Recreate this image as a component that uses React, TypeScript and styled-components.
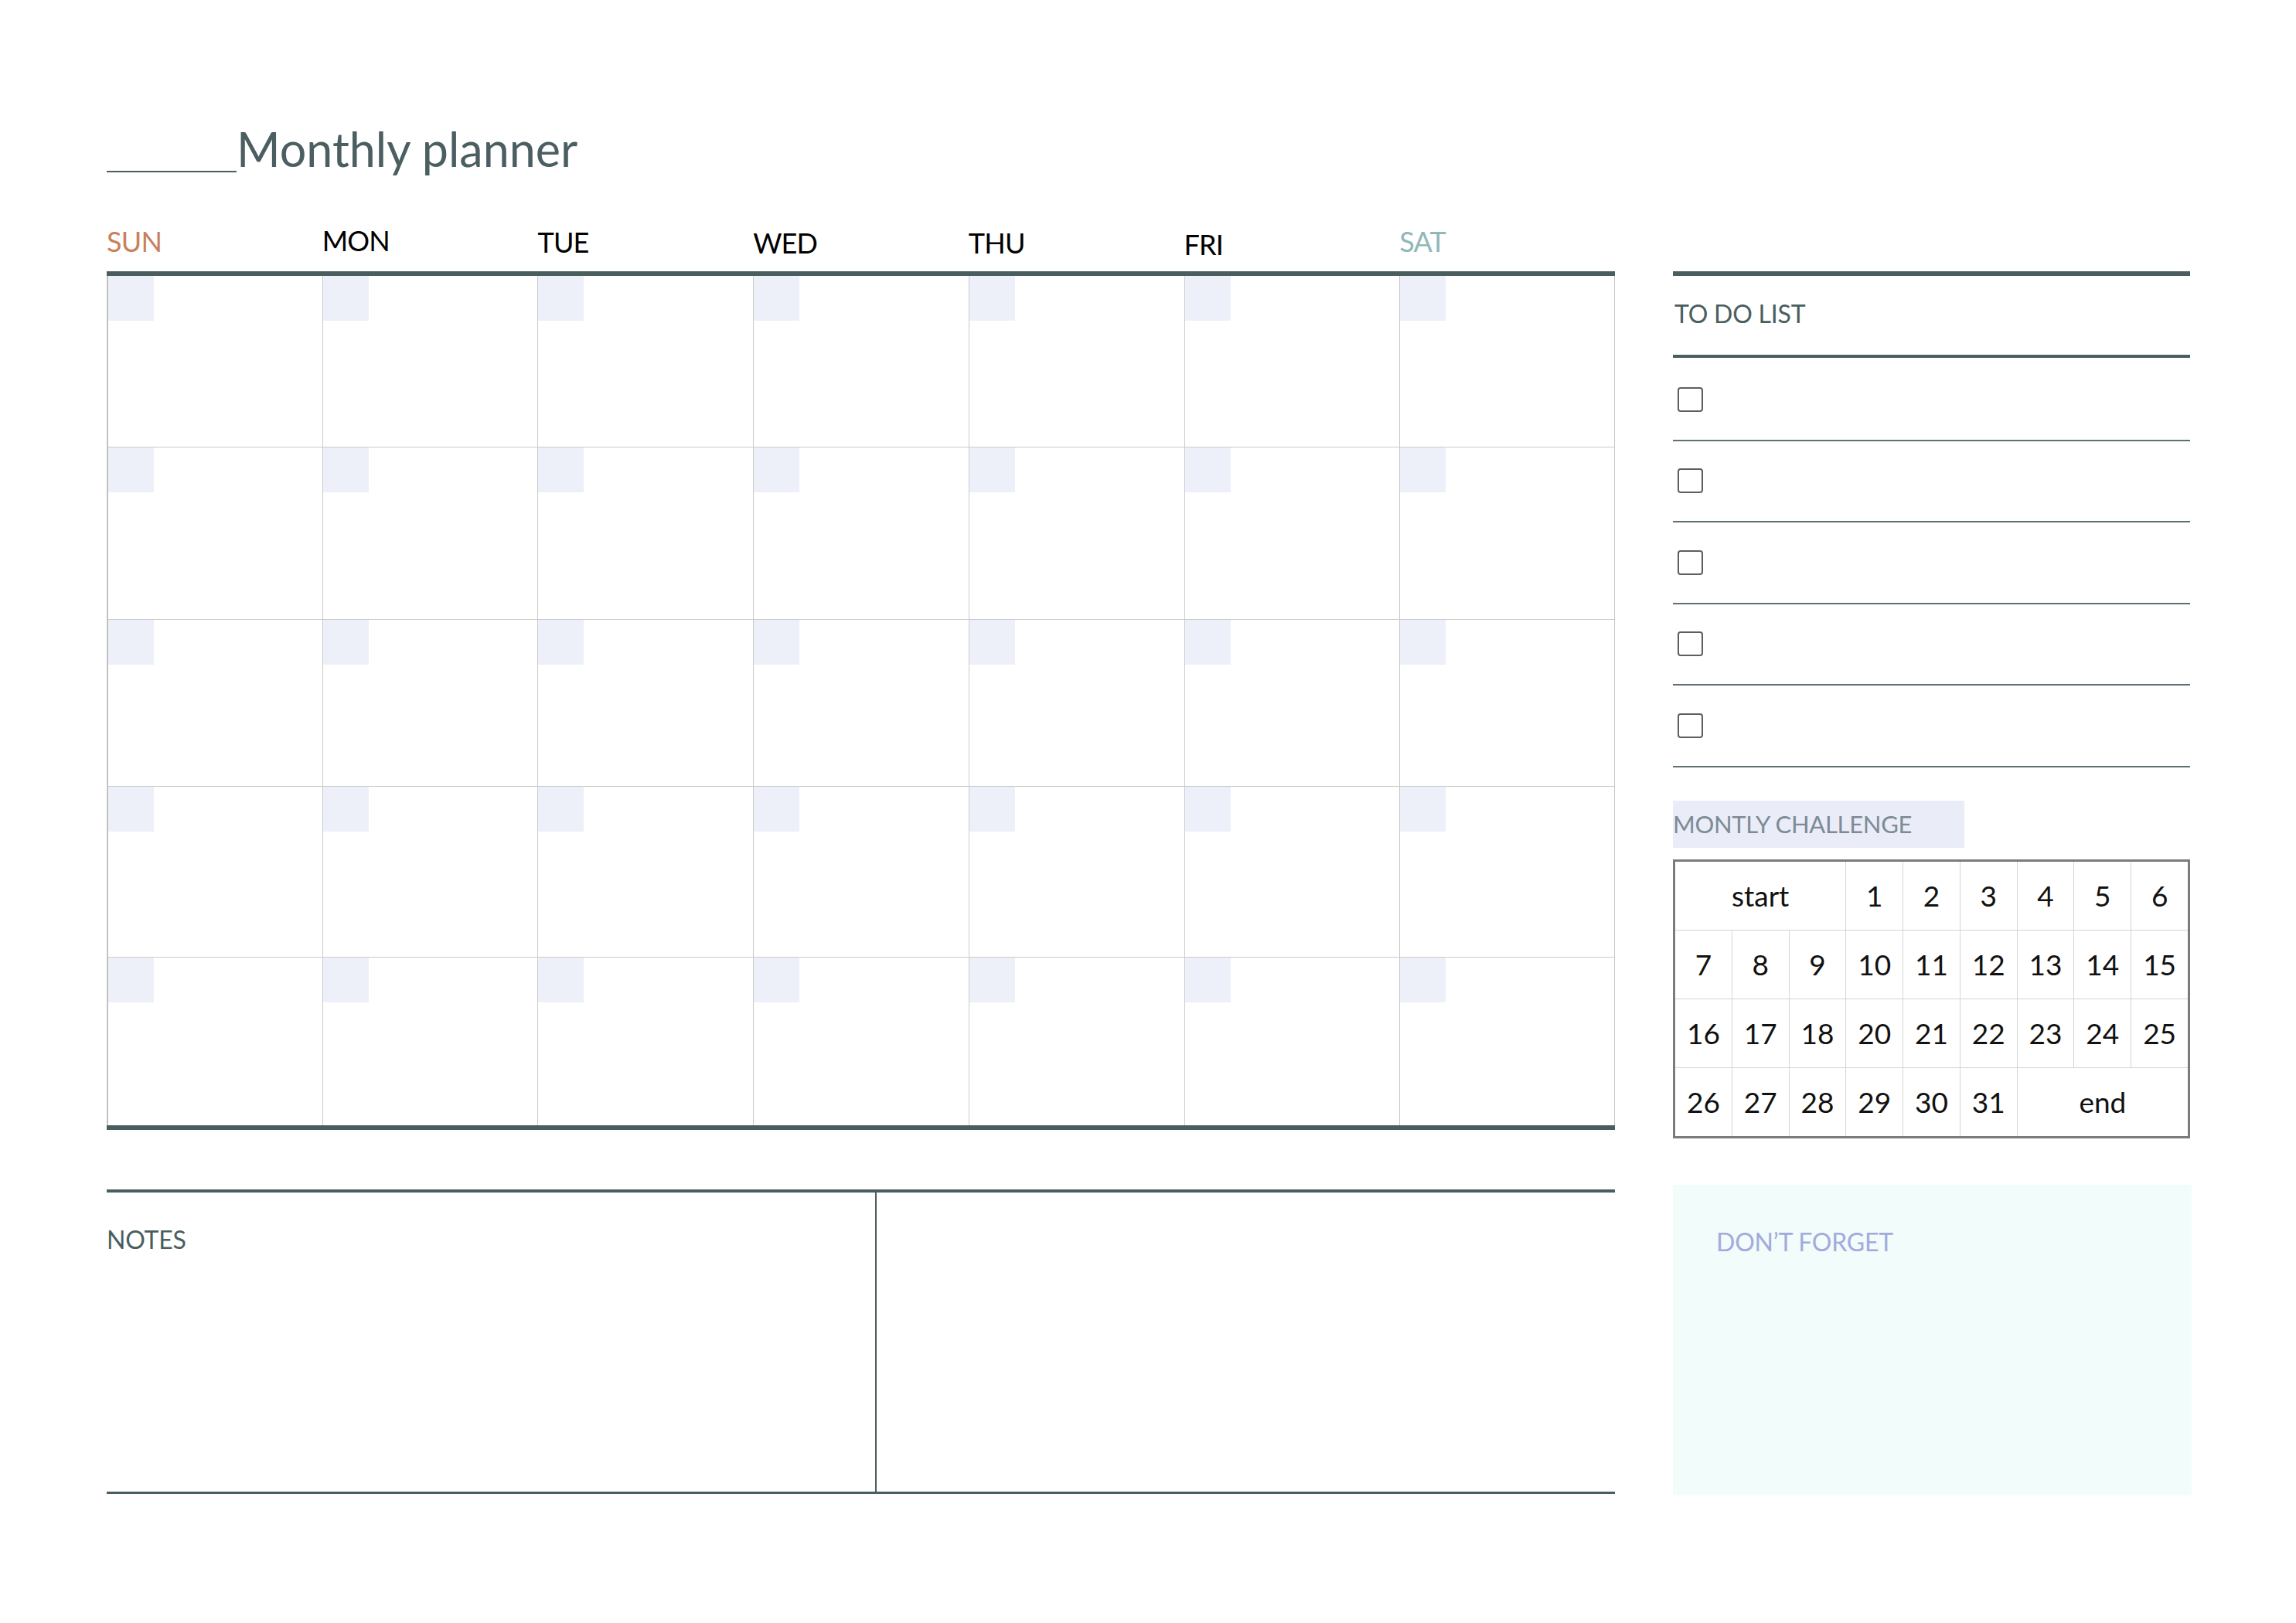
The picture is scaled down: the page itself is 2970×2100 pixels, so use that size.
import React from "react";
import styled, { createGlobalStyle } from "styled-components";

const GlobalStyle = createGlobalStyle`
  html, body {
    margin: 0;
    padding: 0;
    background: #ffffff;
  }
  body {
    font-family: Lato, "Open Sans", "Noto Sans", sans-serif;
  }
  * { box-sizing: border-box; }
`;

const SLATE = "#4a5d5f";
const GRID = "#cbcbcb";

const Page = styled.div`
  width: 2970px;
  min-height: 2100px;
  padding: 162px 0 0 138px;
  background: #fff;
`;

const TitleRow = styled.div`
  display: flex;
  align-items: flex-end;
  height: 61px;
`;

const TitleBlank = styled.span`
  display: block;
  width: 168px;
  height: 2px;
  background: ${SLATE};
`;

const Title = styled.h1`
  margin: 0;
  font-size: 61px;
  line-height: 61px;
  font-weight: 400;
  color: #4b5e61;
  white-space: nowrap;
`;

const Columns = styled.div`
  display: flex;
  align-items: flex-start;
  gap: 75px;
  margin-top: 70px;
`;

const LeftCol = styled.div`
  width: 1951px;
  display: flex;
  flex-direction: column;
`;

const DayHeader = styled.div`
  display: grid;
  grid-template-columns: repeat(7, 1fr);
  height: 38px;
  margin-bottom: 20px;
`;

const DayLabel = styled.span<{ $color: string; $drop: number }>`
  display: inline-block;
  font-size: 36px;
  line-height: 38px;
  letter-spacing: -0.8px;
  color: ${(p) => p.$color};
  transform: translateY(${(p) => p.$drop}px);
  white-space: nowrap;
`;

const Calendar = styled.div`
  display: grid;
  grid-template-columns: repeat(7, 1fr);
  grid-template-rows: 221px 223px 216px 221px 218px;
  border-top: 6px solid ${SLATE};
  border-bottom: 6px solid ${SLATE};
`;

const Cell = styled.div<{ $first: boolean; $last: boolean; $topRow: boolean }>`
  border-left: ${(p) => (p.$first ? "2px solid #c2c2c2" : `1px solid ${GRID}`)};
  border-right: ${(p) => (p.$last ? `1px solid ${GRID}` : "none")};
  border-top: ${(p) => (p.$topRow ? "none" : `1px solid ${GRID}`)};
`;

const DateTab = styled.div`
  width: 59px;
  height: 58px;
  background: #edf0f9;
`;

const Notes = styled.div`
  display: grid;
  grid-template-columns: 996px 1fr;
  height: 394px;
  margin-top: 77px;
  border-top: 4px solid ${SLATE};
  border-bottom: 3px solid ${SLATE};
`;

const NotesPane = styled.div<{ $divider: boolean }>`
  border-right: ${(p) => (p.$divider ? `2px solid ${SLATE}` : "none")};
  padding-top: 44px;
`;

const SectionLabel = styled.div<{ $color: string }>`
  font-size: 32px;
  line-height: 33px;
  letter-spacing: -0.2px;
  color: ${(p) => p.$color};
  white-space: nowrap;
`;

const Sidebar = styled.div`
  width: 669px;
  margin-top: 58px;
  display: flex;
  flex-direction: column;
`;

const TodoHeader = styled.div`
  border-top: 6px solid ${SLATE};
  border-bottom: 4px solid ${SLATE};
  padding: 32px 0 37px 2px;
`;

const TodoList = styled.div`
  display: flex;
  flex-direction: column;
  padding-top: 2px;
`;

const TodoRow = styled.div`
  height: 105.5px;
  display: flex;
  align-items: center;
  padding-left: 6px;
  border-bottom: 2px solid #5d7074;
`;

const CheckBox = styled.span`
  display: block;
  width: 33px;
  height: 32px;
  border: 2px solid #5e5e5e;
  border-radius: 4px;
  background: #fff;
`;

const ChallengeLabel = styled.div`
  width: 377px;
  height: 61px;
  margin-top: 43px;
  display: flex;
  align-items: center;
  background: #eaedf8;
  font-size: 31px;
  line-height: 32px;
  letter-spacing: -0.3px;
  color: #7d8b96;
  white-space: nowrap;
`;

const ChallengeTable = styled.div`
  margin-top: 15px;
  height: 361px;
  display: grid;
  grid-template-columns: repeat(9, 1fr);
  grid-template-rows: repeat(4, 1fr);
  gap: 1px;
  background: #d4d4d4;
  border: 3px solid #7b7b7b;
`;

const ChallengeCell = styled.div<{ $span: number }>`
  grid-column: span ${(p) => p.$span};
  background: #fff;
  display: flex;
  align-items: center;
  justify-content: center;
  font-size: 37px;
  line-height: 37px;
  color: #111;
`;

const ForgetBox = styled.div`
  margin-top: 60px;
  height: 402px;
  width: 671px;
  background: #f1fcfb;
  padding: 57px 0 0 56px;
`;

const days = [
  { name: "SUN", color: "#c9805c", drop: 0 },
  { name: "MON", color: "#000000", drop: -1 },
  { name: "TUE", color: "#000000", drop: 1 },
  { name: "WED", color: "#000000", drop: 2 },
  { name: "THU", color: "#000000", drop: 2 },
  { name: "FRI", color: "#000000", drop: 4 },
  { name: "SAT", color: "#8fb8b8", drop: 0 },
];

const challenge: { label: string; span: number }[] = [
  { label: "start", span: 3 },
  ...Array.from({ length: 31 }, (_, i) => ({ label: String(i + 1), span: 1 })).filter(
    (c) => c.label !== "19"
  ),
  { label: "end", span: 3 },
];

export default function App() {
  const cells = Array.from({ length: 35 }, (_, i) => i);
  return (
    <>
      <GlobalStyle />
      <Page>
        <TitleRow>
          <TitleBlank />
          <Title>Monthly planner</Title>
        </TitleRow>
        <Columns>
          <LeftCol>
            <DayHeader>
              {days.map((d) => (
                <div key={d.name}>
                  <DayLabel $color={d.color} $drop={d.drop}>
                    {d.name}
                  </DayLabel>
                </div>
              ))}
            </DayHeader>
            <Calendar>
              {cells.map((i) => (
                <Cell key={i} $first={i % 7 === 0} $last={i % 7 === 6} $topRow={i < 7}>
                  <DateTab />
                </Cell>
              ))}
            </Calendar>
            <Notes>
              <NotesPane $divider>
                <SectionLabel $color="#4a5e60">NOTES</SectionLabel>
              </NotesPane>
              <NotesPane $divider={false} />
            </Notes>
          </LeftCol>
          <Sidebar>
            <TodoHeader>
              <SectionLabel $color="#4a5e60">TO DO LIST</SectionLabel>
            </TodoHeader>
            <TodoList>
              {[0, 1, 2, 3, 4].map((i) => (
                <TodoRow key={i}>
                  <CheckBox />
                </TodoRow>
              ))}
            </TodoList>
            <ChallengeLabel>MONTLY CHALLENGE</ChallengeLabel>
            <ChallengeTable>
              {challenge.map((c) => (
                <ChallengeCell key={c.label} $span={c.span}>
                  {c.label}
                </ChallengeCell>
              ))}
            </ChallengeTable>
            <ForgetBox>
              <SectionLabel $color="#a3abdc">DON’T FORGET</SectionLabel>
            </ForgetBox>
          </Sidebar>
        </Columns>
      </Page>
    </>
  );
}
